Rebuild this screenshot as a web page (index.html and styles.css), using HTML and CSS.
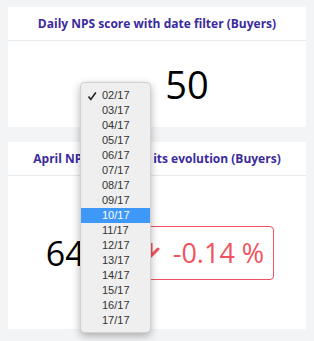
FILE: index.html
```html
<!DOCTYPE html>
<html lang="en">
  <head>
    <meta charset="UTF-8" />
    <meta name="viewport" content="width=device-width, initial-scale=1.0" />
    <title>NPS dashboard</title>
    <link rel="stylesheet" href="styles.css">
  </head>
  <body>
    <div class="page">
      <section class="card card-daily">
        <h2 class="card-title">Daily NPS score with date filter (Buyers)</h2>
        <div class="card-body daily-body">
          <span class="score">50</span>
        </div>
      </section>

      <section class="card card-month">
        <h2 class="card-title">April NPS score and its evolution (Buyers)</h2>
        <div class="card-body month-body">
          <span class="score score-month">64</span>
          <div class="delta">
            <svg class="delta-icon" width="20" height="20" viewBox="0 0 20 20">
              <path d="M8 0 L8 13 M1 6 L8 13 L15 6" fill="none" stroke="currentColor" stroke-width="3" stroke-linecap="round" stroke-linejoin="round" />
            </svg>
            <span>-0.14 %</span>
          </div>
        </div>
      </section>
    </div>

    <!-- open date select popup -->
    <ul class="select-popup">
      <li class="checked">
        <svg class="check" width="10" height="10" viewBox="0 0 10 10">
          <path d="M1.5 5.5 L3.8 8.5 L8.8 1.5" fill="none" stroke="#222" stroke-width="1.6" />
        </svg>
        02/17
      </li>
      <li>03/17</li>
      <li>04/17</li>
      <li>05/17</li>
      <li>06/17</li>
      <li>07/17</li>
      <li>08/17</li>
      <li>09/17</li>
      <li class="active">10/17</li>
      <li>11/17</li>
      <li>12/17</li>
      <li>13/17</li>
      <li>14/17</li>
      <li>15/17</li>
      <li>16/17</li>
      <li>17/17</li>
    </ul>
  </body>
</html>
```

FILE: styles.css
```css
body {
  margin: 0;
  background: #f3f4f6;
  font-family: "Open Sans", sans-serif;
}
.page {
  padding: 7px 8px;
  display: flex;
  flex-direction: column;
  gap: 15px;
}
.card {
  background: #fff;
  display: flex;
  flex-direction: column;
}
.card-daily {
  height: 120px;
}
.card-month {
  height: 187px;
}
.card-title {
  margin: 0;
  height: 33px;
  line-height: 33px;
  border-bottom: 1px solid #e8e9ee;
  text-align: center;
  font-size: 12px;
  font-weight: 700;
  color: #3b2b9d;
}
.card-body {
  flex: 1;
  display: flex;
  align-items: center;
  justify-content: center;
}
.daily-body {
  padding-left: 60px;
}
.score {
  font-size: 38px;
  color: #000;
  line-height: 1;
}
.month-body {
  gap: 49px;
  padding-left: 6px;
}
.score-month {
  font-size: 34px;
}
.delta {
  display: flex;
  align-items: center;
  gap: 10px;
  box-sizing: border-box;
  height: 54px;
  padding: 0 9px 0 8px;
  border: 1px solid #f0535d;
  border-radius: 4px;
  color: #f0535d;
  font-size: 27px;
}

/* the open select list */
.select-popup {
  position: absolute;
  left: 80px;
  top: 82px;
  width: 71px;
  margin: 0;
  padding: 5px 0 4px;
  list-style: none;
  box-sizing: border-box;
  background: #efefef;
  border: 1px solid rgba(0, 0, 0, 0.12);
  border-radius: 5px;
  box-shadow: 0 3px 8px rgba(0, 0, 0, 0.3);
  font-family: "Liberation Sans", sans-serif;
  font-size: 11px;
  color: #333;
}
.select-popup li {
  position: relative;
  height: 15px;
  line-height: 15px;
  padding-left: 21px;
}
.select-popup li.active {
  background: #3d98f8;
  color: #fff;
}
.check {
  position: absolute;
  left: 6px;
  top: 3px;
}
```
